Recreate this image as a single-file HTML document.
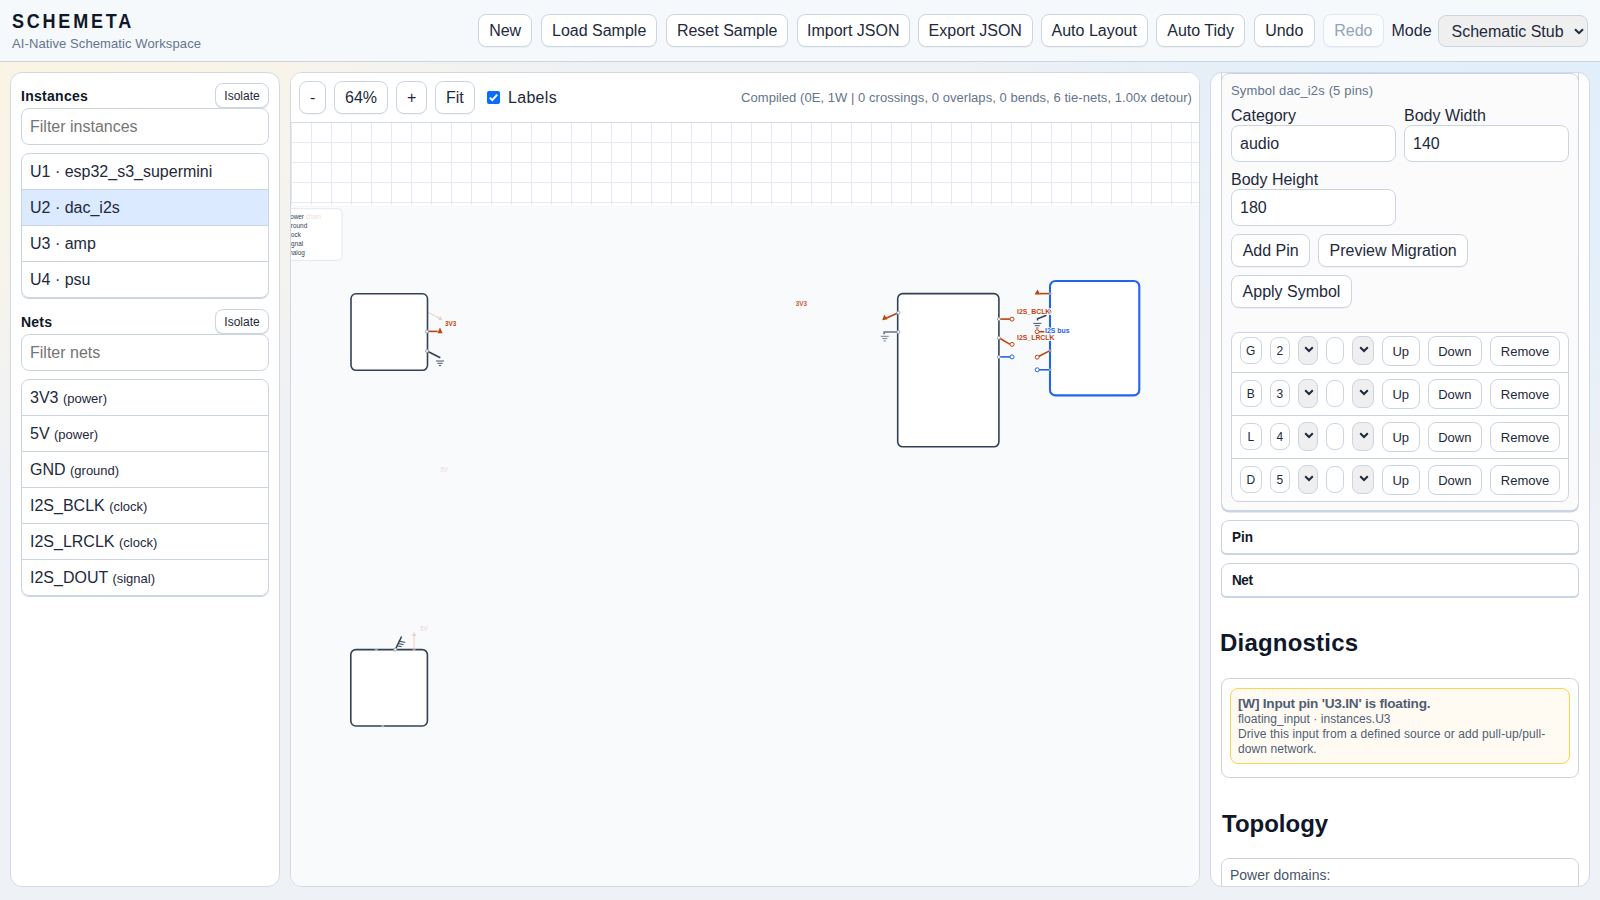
<!DOCTYPE html>
<html><head><meta charset="utf-8"><title>Schemeta</title>
<style>
*{box-sizing:border-box}
html,body{margin:0;padding:0}
body{width:1600px;height:900px;overflow:hidden;position:relative;font-family:"Liberation Sans",sans-serif;color:#1e293b;
background:radial-gradient(ellipse 1000px 800px at 0% 0%,#fbf4e2 0%,#f9f4e8 25%,rgba(249,244,232,0) 60%),radial-gradient(ellipse 1000px 800px at 100% 0%,#e1effa 0%,#e3effa 30%,rgba(227,239,250,0) 65%),#eef1f5}
.abs{position:absolute}
.hdr{position:absolute;left:0;top:0;width:1600px;height:62px;border-bottom:1px solid #cfd5de;background:#f5f9fc}
.title{position:absolute;left:12px;top:10.6px;font-size:18px;font-weight:bold;letter-spacing:.155em;color:#0f172a;transform:scaleY(1.08);transform-origin:0 0}
.sub{position:absolute;left:12px;top:35.5px;font-size:13px;letter-spacing:.1px;color:#64748b;line-height:16px}
.btn{position:absolute;border:1px solid #cbd5e1;border-radius:8px;background:#fff;font-size:16px;color:#1e293b;white-space:nowrap;text-align:center;box-shadow:0 1px 0 rgba(15,23,42,.04)}
.hb{top:14px;height:32.5px;line-height:32.5px}
.tb{top:8px;height:32.5px;line-height:32.5px}
.panel{position:absolute;top:72px;height:815px;border:1px solid #d3d9e2;border-radius:12px;background:#fff;overflow:hidden}
.h3{position:absolute;font-size:14px;font-weight:bold;color:#0f172a;line-height:16px}
.inp{position:absolute;border:1px solid #cbd5e1;border-radius:8px;background:#fff;font-size:16px;color:#1e293b;padding:0 8px;white-space:nowrap}
.ph{color:#757575}
.list{position:absolute;left:10px;width:248px;border:1px solid #cbd5e1;border-radius:8px;overflow:hidden;box-shadow:0 1px 0 #cfd5de}
.li{height:36px;border-top:1px solid #cbd5e1;padding:0 8px;font-size:16px;line-height:36px;white-space:nowrap;color:#1e293b}
.li:first-child{border-top:0;height:35px;line-height:36px}
.li small{font-size:13px}
.sel{background:#dbeafe}
.dl{display:inline-block;transform:scaleY(1.14);transform-origin:0 10.5px}
.lbl{position:absolute;font-size:16px;line-height:18px;color:#1e293b;white-space:nowrap}
.rb{height:32.5px;line-height:32.5px}
.prow{position:absolute;left:0;width:335px;height:30px}
.pi{position:absolute;top:0;height:27px;border:1px solid #cbd5e1;border-radius:8px;background:#fff;font-size:12px;line-height:27px;text-align:center;color:#1e293b}
.ps{position:absolute;top:-1px;height:29px;border:1px solid #cbd5e1;border-radius:8px;background:#efefef;text-align:center;line-height:25px}
.ps svg{vertical-align:middle}
.pb{position:absolute;top:-1px;height:29.5px;border:1px solid #cbd5e1;border-radius:8px;background:#fff;font-size:13px;line-height:29.5px;text-align:center;color:#1e293b}
.det{position:absolute;left:10px;width:357.5px;height:33.5px;border:1px solid #cbd5e1;border-radius:8px 8px 5px 5px;background:#fff;box-shadow:0 1px 0 #cbd5e1;font-size:13.5px;font-weight:bold;line-height:31px;padding-left:10px;color:#0f172a}

.ib{position:absolute;height:24.5px;border:1px solid #cbd5e1;border-radius:8px;background:#fff;font-size:12px;line-height:24.5px;padding:0;width:54px;text-align:center;box-shadow:0 1px 0 rgba(15,23,42,.12)}
</style></head><body>

<div class="hdr">
  <div class="title">SCHEMETA</div>
  <div class="sub">AI-Native Schematic Workspace</div>
  <div class="btn hb" style="left:478px;width:54.3px">New</div>
  <div class="btn hb" style="left:541px;width:116.3px">Load Sample</div>
  <div class="btn hb" style="left:666px;width:122.3px">Reset Sample</div>
  <div class="btn hb" style="left:797px;width:112.5px">Import JSON</div>
  <div class="btn hb" style="left:918px;width:114.5px">Export JSON</div>
  <div class="btn hb" style="left:1041px;width:106.5px">Auto Layout</div>
  <div class="btn hb" style="left:1156px;width:89.3px">Auto Tidy</div>
  <div class="btn hb" style="left:1254px;width:60.5px">Undo</div>
  <div class="btn hb" style="left:1323px;width:60.7px;color:#94a3b8;border-color:#e2e8f0;background:#fafcfd">Redo</div>
  <div class="abs" style="left:1391.5px;top:22px;font-size:16px;line-height:18px;color:#1e293b">Mode</div>
  <div class="abs" style="left:1438px;top:15px;width:150px;height:31.5px;border:1px solid #cbd5e1;border-radius:8px;background:#efefef;font-size:16px;line-height:31.5px;padding-left:12.5px;color:#1e293b">Schematic Stub
    <svg class="abs" style="left:135px;top:12px" width="10" height="7" viewBox="0 0 10 7"><path d="M1 1.2 L5 5.2 L9 1.2" fill="none" stroke="#1e293b" stroke-width="2"/></svg>
  </div>
</div>

<!-- LEFT PANEL -->
<div class="panel" style="left:10px;width:270px">
  <div class="h3" style="left:10px;top:15px;letter-spacing:.28px">Instances</div>
  <div class="ib" style="left:204px;top:10px">Isolate</div>
  <div class="inp" style="left:10px;top:35px;width:248px;height:36.5px;line-height:36.5px"><span class="ph">Filter instances</span></div>
  <div class="list" style="top:80px">
    <div class="li">U1 · esp32_s3_supermini</div>
    <div class="li sel">U2 · dac_i2s</div>
    <div class="li">U3 · amp</div>
    <div class="li">U4 · psu</div>
  </div>
  <div class="h3" style="left:10px;top:241px;letter-spacing:.2px">Nets</div>
  <div class="ib" style="left:204px;top:236px">Isolate</div>
  <div class="inp" style="left:10px;top:261px;width:248px;height:36.5px;line-height:36.5px"><span class="ph">Filter nets</span></div>
  <div class="list" style="top:306px">
    <div class="li">3V3 <small>(power)</small></div>
    <div class="li">5V <small>(power)</small></div>
    <div class="li">GND <small>(ground)</small></div>
    <div class="li">I2S_BCLK <small>(clock)</small></div>
    <div class="li">I2S_LRCLK <small>(clock)</small></div>
    <div class="li">I2S_DOUT <small>(signal)</small></div>
  </div>
</div>

<!-- CANVAS PANEL -->
<div class="panel" id="canvas" style="left:290px;width:910px">
  <div class="abs" style="left:0;top:0;width:908px;height:50px;border-bottom:1px solid #d3d9e2;background:#fff"></div>
  <div class="btn tb" style="left:8px;width:27.3px">-</div>
  <div class="btn tb" style="left:43px;width:54px">64%</div>
  <div class="btn tb" style="left:105px;width:31.3px">+</div>
  <div class="btn tb" style="left:144px;width:39.8px">Fit</div>
  <svg class="abs" style="left:196px;top:18px" width="13" height="13" viewBox="0 0 13 13"><rect x="0" y="0" width="13" height="13" rx="2" fill="#0b6bff"/><path d="M2.8 6.6 L5.3 9.1 L10.2 3.6" fill="none" stroke="#fff" stroke-width="2"/></svg>
  <div class="abs" style="left:217px;top:16px;font-size:16px;line-height:18px;color:#1e293b;letter-spacing:.3px">Labels</div>
  <div class="abs" style="right:7px;top:17px;font-size:13px;line-height:16px;color:#64748b;white-space:nowrap;letter-spacing:.05px">Compiled (0E, 1W | 0 crossings, 0 overlaps, 0 bends, 6 tie-nets, 1.00x detour)</div>
  <svg class="abs" style="left:0;top:50px" width="908" height="763" viewBox="291 123 908 763">
    <defs>
      <pattern id="grid" x="291" y="123" width="20" height="20" patternUnits="userSpaceOnUse">
        <rect x="0" y="19" width="20" height="1" fill="#e6eaf0"/>
        <rect x="0" y="0" width="1" height="20" fill="#e6eaf0"/>
      </pattern>
    </defs>
    <rect x="291" y="123" width="908" height="82" fill="#fff"/>
    <rect x="291" y="123" width="908" height="82" fill="url(#grid)"/>
    <rect x="291" y="205" width="908" height="681" fill="#f8fafc"/>
    <rect x="270" y="208.7" width="72" height="51.6" rx="4" fill="#fff" stroke="#e2e8f0" stroke-width="1"/>
    <g font-family="Liberation Sans" font-size="6.4" fill="#334155"><text x="286.6" y="219">power<tspan fill="#e7e2e0"> chain</tspan></text><text x="287.3" y="227.8">ground</text><text x="286.4" y="236.8">clock</text><text x="286.5" y="245.8">signal</text><text x="285.6" y="254.8">analog</text></g>
    <rect x="351" y="293.8" width="76.5" height="76.5" rx="5" fill="#fff" stroke="#334155" stroke-width="1.6"/>
    <g opacity=".25"><path d="M427 312 L440 318.5" stroke="#c2410c" stroke-width="1" fill="none"/><path d="M442.5 319.8 L438.3 319.9 L440.2 316.3 Z" fill="#c2410c"/></g>
    <path d="M427 331.4 H437.6" stroke="#c2410c" stroke-width="1.6"/><path d="M437.4 333.2 L442.6 333.2 L440 327.6 Z" fill="#c2410c"/>
    <circle cx="427" cy="331.4" r="1.5" fill="#fff" stroke="#8b97a8" stroke-width="0.9"/>
    <path d="M427 351 L440.3 357.8" stroke="#334155" stroke-width="1.6"/>
    <circle cx="427" cy="351" r="1.5" fill="#fff" stroke="#8b97a8" stroke-width="0.9"/>
    <path d="M436.0 361.0 H444.0 M437.5 363.3 H442.5 M438.9 365.6 H441.1" stroke="#334155" stroke-width="0.9" fill="none"/>
    <text x="445" y="326" font-family="Liberation Sans" font-size="6.4" font-weight="bold" fill="#c2410c" stroke="#fff" stroke-width="1.5" paint-order="stroke">3V3</text>
    <text x="795.8" y="306" font-family="Liberation Sans" font-size="6.4" font-weight="bold" fill="#c2410c" opacity=".85">3V3</text>
    <text x="440.2" y="471.5" font-family="Liberation Sans" font-size="6.4" font-weight="bold" fill="#c2410c" opacity=".12">5V</text>
    <rect x="897.7" y="293.6" width="101.2" height="153.2" rx="5" fill="#fff" stroke="#334155" stroke-width="1.6"/>
    <path d="M898.3 312.7 L886 318.3" stroke="#c2410c" stroke-width="1.6"/><path d="M882.2 320.2 L884.2 314.8 L887.6 319.2 Z" fill="#c2410c"/>
    <circle cx="898.3" cy="312.7" r="1.5" fill="#fff" stroke="#8b97a8" stroke-width="0.9"/>
    <path d="M898.3 332 H884.2 V334.2" stroke="#64748b" stroke-width="1.6" fill="none"/>
    <circle cx="898.3" cy="332" r="1.5" fill="#fff" stroke="#8b97a8" stroke-width="0.9"/>
    <path d="M880.8 336.3 H888.8 M882.3 338.6 H887.3 M883.7 340.9 H885.9" stroke="#64748b" stroke-width="0.9" fill="none"/>
    <path d="M998.9 319.1 L1010.1 319.1" stroke="#c2410c" stroke-width="1.6"/>
    <circle cx="998.9" cy="319.1" r="1.5" fill="#fff" stroke="#8b97a8" stroke-width="0.9"/>
    <circle cx="1012" cy="319.1" r="2" fill="#fff" stroke="#c2410c" stroke-width="1"/>
    <path d="M998.9 337.8 L1010.1 344.4" stroke="#c2410c" stroke-width="1.6"/>
    <circle cx="998.9" cy="337.8" r="1.5" fill="#fff" stroke="#8b97a8" stroke-width="0.9"/>
    <circle cx="1012" cy="344.4" r="2" fill="#fff" stroke="#c2410c" stroke-width="1"/>
    <path d="M998.9 356.9 L1010.1 356.9" stroke="#2563eb" stroke-width="1.6"/>
    <circle cx="998.9" cy="356.9" r="1.5" fill="#fff" stroke="#8b97a8" stroke-width="0.9"/>
    <circle cx="1012" cy="356.9" r="2" fill="#fff" stroke="#2563eb" stroke-width="1"/>
    <rect x="1050" y="281" width="89.3" height="114.4" rx="5.5" fill="#fff" stroke="#2563eb" stroke-width="2.1"/>
    <path d="M1050 293.6 H1040" stroke="#c2410c" stroke-width="1.6"/><path d="M1034.6 294.6 L1040.4 294.6 L1037.5 289.6 Z" fill="#c2410c"/>
    <path d="M1046.5 315.3 L1037.5 318.8 V320.6" stroke="#334155" stroke-width="1.5" fill="none"/>
    <path d="M1033.3 323.4 H1041.3 M1034.8 325.7 H1039.8 M1036.2 328.0 H1038.4" stroke="#334155" stroke-width="0.9" fill="none"/>
    <path d="M1039 331.7 H1044.5" stroke="#c2410c" stroke-width="1.6"/>
    <circle cx="1037.1" cy="331.7" r="2" fill="#fff" stroke="#c2410c" stroke-width="1"/>
    <path d="M1050 350.6 L1039 356.3" stroke="#c2410c" stroke-width="1.6"/>
    <circle cx="1037.2" cy="357.2" r="2" fill="#fff" stroke="#c2410c" stroke-width="1"/>
    <path d="M1050 369.8 H1039" stroke="#2563eb" stroke-width="1.6"/>
    <circle cx="1037.2" cy="369.8" r="2" fill="#fff" stroke="#2563eb" stroke-width="1"/>
    <rect x="1049" y="292.40000000000003" width="2.4" height="2.4" fill="#94a3b8"/>
    <rect x="1049" y="311.0" width="2.4" height="2.4" fill="#94a3b8"/>
    <rect x="1049" y="349.40000000000003" width="2.4" height="2.4" fill="#94a3b8"/>
    <rect x="1049" y="368.6" width="2.4" height="2.4" fill="#94a3b8"/>
    <text x="1017" y="313.5" font-family="Liberation Sans" font-size="6.9" font-weight="bold" stroke="#fff" stroke-width="1.6" paint-order="stroke" fill="#c2410c">I2S_BCLK</text>
    <text x="1017" y="339.8" font-family="Liberation Sans" font-size="6.9" font-weight="bold" stroke="#fff" stroke-width="1.6" paint-order="stroke" fill="#c2410c">I2S_LRCLK</text>
    <text x="1045" y="332.8" font-family="Liberation Sans" font-size="6.9" font-weight="bold" stroke="#fff" stroke-width="1.6" paint-order="stroke" fill="#2563eb">I2S bus</text>
    <rect x="350.8" y="649.6" width="76.6" height="76.4" rx="5" fill="#fff" stroke="#334155" stroke-width="1.6"/>
    <g opacity=".2"><path d="M414.1 649.6 V635" stroke="#c2410c" stroke-width="1"/><path d="M411.6 636 L416.6 636 L414.1 632 Z" fill="#c2410c"/></g>
    <text x="420" y="631" font-family="Liberation Sans" font-size="6.4" font-weight="bold" fill="#c2410c" opacity=".14">5V</text>
    <path d="M395.3 649.6 L401.6 636.5" stroke="#334155" stroke-width="1.5"/>
    <path d="M398.6 641.2 L405.2 642.4 M398.2 643.6 L403.6 644.6 M397.8 646 L401.6 646.6" stroke="#334155" stroke-width="1" fill="none"/>
    <circle cx="395.3" cy="649.6" r="1.5" fill="#fff" stroke="#8b97a8" stroke-width="0.9"/>
    <circle cx="376.3" cy="649.6" r="1.5" fill="#cbd5e1" opacity=".6"/><circle cx="382.9" cy="726" r="1.5" fill="#cbd5e1" opacity=".6"/><circle cx="414.1" cy="649.6" r="1.5" fill="#e7c9bb" opacity=".6"/>
  </svg>
</div>

<!-- RIGHT PANEL -->
<div class="panel" id="right" style="left:1210px;width:380px">
  <!-- symbol box: page x 1221.5..1578.5 y 73..511 ; panel inner origin 1211,73 -->
  <div class="abs" style="left:10px;top:0;width:357.5px;height:438px;border:1px solid #cbd5e1;border-radius:8px;background:#fbfbfc;box-shadow:0 1.5px 0 #cbd5e1"></div>
  <div class="abs" style="left:10px;top:0;width:1px;height:12px;background:#cbd5e1"></div><div class="abs" style="left:366.5px;top:0;width:1px;height:12px;background:#cbd5e1"></div>
  <div class="abs" style="left:20px;top:9.5px;font-size:13px;line-height:16px;color:#64748b;white-space:nowrap;letter-spacing:.15px">Symbol dac_i2s (5 pins)</div>
  <div class="lbl" style="left:20px;top:34px">Category</div>
  <div class="inp" style="left:20px;top:52px;width:165px;height:36.5px;line-height:36.5px">audio</div>
  <div class="lbl" style="left:193px;top:34px">Body Width</div>
  <div class="inp" style="left:193px;top:52px;width:165px;height:36.5px;line-height:36.5px">140</div>
  <div class="lbl" style="left:20px;top:98px">Body Height</div>
  <div class="inp" style="left:20px;top:116px;width:165px;height:36.5px;line-height:36.5px">180</div>
  <div class="btn rb" style="left:20px;top:161px;width:79.3px">Add Pin</div>
  <div class="btn rb" style="left:107px;top:161px;width:150.3px">Preview Migration</div>
  <div class="btn rb" style="left:20px;top:202px;width:121px">Apply Symbol</div>
  <div class="abs" style="left:20px;top:259px;width:337.5px;height:170px;border:1px solid #cbd5e1;border-radius:8px;background:#fff;overflow:hidden">
    <div class="prow" style="top:4px">
      <div class="pi" style="left:8px;width:21.5px">G</div>
      <div class="pi" style="left:38px;width:19.5px">2</div>
      <div class="ps" style="left:66px;width:20px"><svg width="10" height="7" viewBox="0 0 10 7" style="position:relative;top:-0.8px;left:1.3px"><path d="M1.2 1.2 L5 5 L8.8 1.2" fill="none" stroke="#1e293b" stroke-width="2"/></svg></div>
      <div class="pi" style="left:94px;width:17.5px"></div>
      <div class="ps" style="left:120px;width:21.5px"><svg width="10" height="7" viewBox="0 0 10 7" style="position:relative;top:-0.8px;left:1.3px"><path d="M1.2 1.2 L5 5 L8.8 1.2" fill="none" stroke="#1e293b" stroke-width="2"/></svg></div>
      <div class="pb" style="left:150px;width:37.5px">Up</div>
      <div class="pb" style="left:196px;width:53.5px">Down</div>
      <div class="pb" style="left:258px;width:70px">Remove</div>
    </div><div class="abs" style="left:0;top:39px;width:100%;height:1px;background:#cbd5e1"></div><div class="prow" style="top:47px">
      <div class="pi" style="left:8px;width:21.5px">B</div>
      <div class="pi" style="left:38px;width:19.5px">3</div>
      <div class="ps" style="left:66px;width:20px"><svg width="10" height="7" viewBox="0 0 10 7" style="position:relative;top:-0.8px;left:1.3px"><path d="M1.2 1.2 L5 5 L8.8 1.2" fill="none" stroke="#1e293b" stroke-width="2"/></svg></div>
      <div class="pi" style="left:94px;width:17.5px"></div>
      <div class="ps" style="left:120px;width:21.5px"><svg width="10" height="7" viewBox="0 0 10 7" style="position:relative;top:-0.8px;left:1.3px"><path d="M1.2 1.2 L5 5 L8.8 1.2" fill="none" stroke="#1e293b" stroke-width="2"/></svg></div>
      <div class="pb" style="left:150px;width:37.5px">Up</div>
      <div class="pb" style="left:196px;width:53.5px">Down</div>
      <div class="pb" style="left:258px;width:70px">Remove</div>
    </div><div class="abs" style="left:0;top:82px;width:100%;height:1px;background:#cbd5e1"></div><div class="prow" style="top:90px">
      <div class="pi" style="left:8px;width:21.5px">L</div>
      <div class="pi" style="left:38px;width:19.5px">4</div>
      <div class="ps" style="left:66px;width:20px"><svg width="10" height="7" viewBox="0 0 10 7" style="position:relative;top:-0.8px;left:1.3px"><path d="M1.2 1.2 L5 5 L8.8 1.2" fill="none" stroke="#1e293b" stroke-width="2"/></svg></div>
      <div class="pi" style="left:94px;width:17.5px"></div>
      <div class="ps" style="left:120px;width:21.5px"><svg width="10" height="7" viewBox="0 0 10 7" style="position:relative;top:-0.8px;left:1.3px"><path d="M1.2 1.2 L5 5 L8.8 1.2" fill="none" stroke="#1e293b" stroke-width="2"/></svg></div>
      <div class="pb" style="left:150px;width:37.5px">Up</div>
      <div class="pb" style="left:196px;width:53.5px">Down</div>
      <div class="pb" style="left:258px;width:70px">Remove</div>
    </div><div class="abs" style="left:0;top:125px;width:100%;height:1px;background:#cbd5e1"></div><div class="prow" style="top:133px">
      <div class="pi" style="left:8px;width:21.5px">D</div>
      <div class="pi" style="left:38px;width:19.5px">5</div>
      <div class="ps" style="left:66px;width:20px"><svg width="10" height="7" viewBox="0 0 10 7" style="position:relative;top:-0.8px;left:1.3px"><path d="M1.2 1.2 L5 5 L8.8 1.2" fill="none" stroke="#1e293b" stroke-width="2"/></svg></div>
      <div class="pi" style="left:94px;width:17.5px"></div>
      <div class="ps" style="left:120px;width:21.5px"><svg width="10" height="7" viewBox="0 0 10 7" style="position:relative;top:-0.8px;left:1.3px"><path d="M1.2 1.2 L5 5 L8.8 1.2" fill="none" stroke="#1e293b" stroke-width="2"/></svg></div>
      <div class="pb" style="left:150px;width:37.5px">Up</div>
      <div class="pb" style="left:196px;width:53.5px">Down</div>
      <div class="pb" style="left:258px;width:70px">Remove</div>
    </div>
  </div>
  <!-- Pin / Net -->
  <div class="det" style="top:447px"><span class="dl">Pin</span></div>
  <div class="det" style="top:490px"><span class="dl" style="letter-spacing:-.4px">Net</span></div>
  <div class="abs" style="left:9px;top:556px;letter-spacing:.2px;font-size:24px;font-weight:bold;line-height:28px;color:#0f172a">Diagnostics</div>
  <div class="abs" style="left:10px;top:605px;width:357.5px;height:100px;border:1px solid #cbd5e1;border-radius:8px;background:#fff">
    <div class="abs" style="left:8px;top:8.5px;width:340px;height:76.5px;border:1px solid #fcd34d;border-radius:8px;background:#fffbf3;padding:6.5px 7px;color:#4f5e73">
      <div style="font-size:13.6px;font-weight:bold;line-height:17px;white-space:nowrap;letter-spacing:-.22px">[W] Input pin 'U3.IN' is floating.</div>
      <div style="font-size:12px;line-height:15px;white-space:nowrap;letter-spacing:.04px">floating_input · instances.U3</div>
      <div style="font-size:12px;line-height:15px;letter-spacing:.1px;white-space:nowrap">Drive this input from a defined source or add pull-up/pull-<br>down network.</div>
    </div>
  </div>
  <div class="abs" style="left:11px;top:737px;font-size:24px;font-weight:bold;line-height:28px;color:#0f172a">Topology</div>
  <div class="abs" style="left:10px;top:785px;width:357.5px;height:100px;border:1px solid #cbd5e1;border-radius:8px;background:#fff">
    <div class="abs" style="left:8px;top:8px;font-size:14px;line-height:16px;color:#475569;white-space:nowrap">Power domains:</div>
  </div>
</div>

</body></html>
